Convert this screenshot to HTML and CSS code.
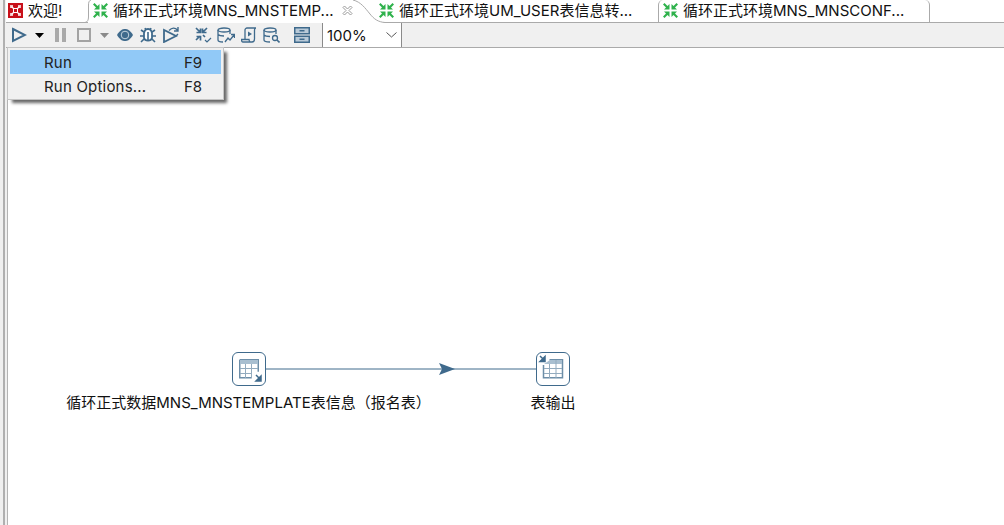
FILE: index.html
```html
<!DOCTYPE html>
<html lang="zh">
<head>
<meta charset="utf-8">
<title>Transformation</title>
<link rel="stylesheet" href="styles.css">
</head>
<body>
<svg width="0" height="0" class="defs">
  <defs>
    <g id="trans">
      <path d="M0 1.500L1.500 0 4.500 3 6.500 1V6.500H1L3 4.500zM15 1.500L13.500 0 10.500 3 8.500 1V6.500H14L12 4.500zM0 13.500L1.500 15 4.500 12 6.500 14V8.500H1L3 10.500zM15 13.500L13.500 15 10.500 12 8.500 14V8.500H14L12 10.500z" fill="#2fb24c"/>
    </g>
  </defs>
</svg>
<div class="edge"><div class="edge-line"></div></div>
<div class="workspace">
  <div class="tabbar">
    <div class="tab tab-welcome">
      <svg class="logo" width="15" height="15" viewBox="0 0 15 15"><rect width="15" height="15" fill="#c8101a"/><path d="M3.500 3.500L6 6M11.500 3.500L9 6M3.500 11.500L6 9M11.500 11.500L9 9" stroke="#fff" stroke-width="1.200" fill="none"/><path d="M5.500 5.500h4v4h-4z" stroke="#fff" fill="none"/><path d="M2 2h3v3H2zM10 2h3v3h-3zM2 10h3v3H2zM10 10h3v3h-3z" fill="#fff" fill-opacity=".75"/></svg>
      <span>欢迎!</span>
    </div>
    <div class="tab tab-active">
      <svg class="curve-left" width="6" height="23" viewBox="0 0 6 23"><path d="M0 22.500C2.500 22 3.500 20 3.500 17V5C3.500 2.500 4 .5 6 0" fill="none" stroke="#aaa"/></svg>
      <svg class="ti" width="15" height="15" viewBox="0 0 15 15"><use href="#trans"/></svg>
      <span>循环正式环境MNS_MNSTEMP...</span>
      <svg class="close" width="11" height="11" viewBox="0 0 11 11"><path d="M1 2.500L2.500 1 5.500 4 8.500 1 10 2.500 7 5.500 10 8.500 8.500 10 5.500 7 2.500 10 1 8.500 4 5.500z" fill="none" stroke="#9a9a9a"/></svg>
      <svg class="curve" width="32" height="23" viewBox="0 0 32 23"><path d="M0 0C8 2 12 8 17 14 21 19 25 22 32 22.500V23H0z" fill="#fff"/><path d="M0 0C8 2 12 8 17 14 21 19 25 22 32 22.500" fill="none" stroke="#aaa"/></svg>
    </div>
    <div class="tab tab-um">
      <svg class="ti" width="15" height="15" viewBox="0 0 15 15"><use href="#trans"/></svg>
      <span>循环正式环境UM_USER表信息转...</span>
    </div>
    <div class="tab tab-conf">
      <svg class="ti" width="15" height="15" viewBox="0 0 15 15"><use href="#trans"/></svg>
      <span>循环正式环境MNS_MNSCONF...</span>
    </div>
  </div>
  <div class="toolbar">
    <svg class="tool-run" width="16" height="16" viewBox="0 0 16 16"><path d="M2 2l12 6-12 6z" fill="none" stroke="#3f6a8c" stroke-width="2"/></svg>
    <svg class="tool-drop" width="9" height="5" viewBox="0 0 9 5"><path d="M0 0h9L4.500 5z" fill="#000"/></svg>
    <svg class="tool-pause" width="11" height="14" viewBox="0 0 11 14"><path d="M0 0h4v14H0zM7 0h4v14H7z" fill="#a9a9a9"/></svg>
    <svg class="tool-stop" width="14" height="14" viewBox="0 0 14 14"><rect x="1" y="1" width="12" height="12" fill="none" stroke="#a3a3a3" stroke-width="2"/></svg>
    <svg class="tool-drop2" width="9" height="5" viewBox="0 0 9 5"><path d="M0 0h9L4.500 5z" fill="#8a8a8a"/></svg>
    <svg class="tool-eye" width="16" height="12" viewBox="0 0 16 12"><path d="M0 6C3 1 5.500 0 8 0s5 1 8 6c-3 5-5.500 6-8 6S3 11 0 6z" fill="#3f6a8c"/><circle cx="8" cy="6" r="3.800" fill="#3f6a8c" stroke="#c5d4df"/></svg>
    <svg class="tool-bug" width="16" height="16" viewBox="0 0 16 16"><path d="M5 3.500C6 1.500 10 1.500 11 3.500L12 6V11C11 14.500 5 14.500 4 11V6z" fill="#fff" stroke="#3f6a8c" stroke-width="1.800"/><path d="M8 5v9M4 5L1 3M12 5l3-2M4 9H0M12 9h4M4 12l-3 3M12 12l3 3M5 1L6 3M11 1L10 3" stroke="#3f6a8c" stroke-width="1.600" fill="none"/></svg>
    <svg class="tool-step" width="17" height="16" viewBox="0 0 17 16"><path d="M1 3v12l12-6z" fill="none" stroke="#3f6a8c" stroke-width="1.800"/><path d="M6 3.500C9 .5 12 .5 14.500 3M15 0v4H11M15 7l-2 2" fill="none" stroke="#3f6a8c" stroke-width="1.400"/></svg>
    <svg class="tool-a" width="17" height="16" viewBox="0 0 17 16"><path d="M1 1l4 4M5.500 1.500v4h-4M12 1L8 5M7.500 1.500v4h4M1 13l4-4M5.500 13.500v-4h-4M8 8l2 2" fill="none" stroke="#3f6a8c" stroke-width="1.700"/><path d="M10 13l2 2 4-4" fill="none" stroke="#3f6a8c" stroke-width="1.200"/></svg>
    <svg class="tool-b" width="18" height="16" viewBox="0 0 18 16"><ellipse cx="7" cy="3" rx="6" ry="2" fill="none" stroke="#3f6a8c" stroke-width="1.300"/><path d="M1 3v10c0 1 2 2 5 2M13 3v4M1 7.500c1 1 3 1.500 6 1.500" fill="none" stroke="#3f6a8c" stroke-width="1.300"/><path d="M8 15l3-4 2 2 4-5M14 7.500h3.500v3.500" fill="none" stroke="#3f6a8c" stroke-width="1.300"/></svg>
    <svg class="tool-c" width="16" height="16" viewBox="0 0 16 16"><path d="M4 12V3c0-1 1-2 2-2h9c-1 0-1.500 1-1.500 2v9c0 2-1 3-2.500 3H2c-1 0-1.500-1-1.500-2.500H8c0 1 .5 1.500 1 2.500" fill="none" stroke="#3f6a8c" stroke-width="1.300"/><path d="M7 4.500l4 2.500-4 2.500z" fill="#3f6a8c"/></svg>
    <svg class="tool-d" width="17" height="16" viewBox="0 0 17 16"><ellipse cx="7" cy="3" rx="6" ry="2" fill="none" stroke="#3f6a8c" stroke-width="1.300"/><path d="M1 3v10c0 1 2 2 6 2M13 3v4M1 8c1 1 3 1.500 6 1.500" fill="none" stroke="#3f6a8c" stroke-width="1.300"/><circle cx="12" cy="11" r="2.500" fill="none" stroke="#3f6a8c" stroke-width="1.300"/><path d="M14 13l2.500 2.500" stroke="#3f6a8c" stroke-width="1.600"/></svg>
    <svg class="tool-e" width="16" height="16" viewBox="0 0 16 16"><rect x=".75" y=".75" width="14.500" height="6" fill="#b9cad8" stroke="#3f6a8c" stroke-width="1.500"/><rect x=".75" y="9.250" width="14.500" height="6" fill="#b9cad8" stroke="#3f6a8c" stroke-width="1.500"/><path d="M5.500 3.750h5M5.500 12.250h5" stroke="#3f6a8c" stroke-width="1.500"/></svg>
    <div class="zoom">
      <span>100%</span>
      <svg width="11" height="6" viewBox="0 0 11 6"><path d="M.5.500L5.500 5 10.500.500" fill="none" stroke="#555"/></svg>
    </div>
  </div>
  <div class="main">
    <div class="rail"></div>
    <div class="canvas">
      <div class="menu">
        <div class="menu-item is-hot"><span class="menu-label">Run</span><span>F9</span></div>
        <div class="menu-item"><span class="menu-label">Run Options...</span><span>F8</span></div>
      </div>
      <svg class="hop" width="270" height="12" viewBox="0 0 270 12">
        <path d="M0 6h270" stroke="#3f6a8c"/>
        <path d="M173 0l16 6-16 6 3-6z" fill="#3f6a8c"/>
      </svg>
      <div class="step step-in">
        <div class="step-icon step-icon-in">
          <svg width="32" height="32" viewBox="0 0 32 32">
            <path d="M6.750 6.750h18.500v12M6.750 6.750v18h12" fill="none" stroke="#6d8ea8" stroke-width="1.500"/>
            <path d="M7 7h18v4H7z" fill="#a9bfd0"/>
            <path d="M7 15.500h18M7 20.500h12M12.500 11v14M18.500 11v14" stroke="#93abbe"/>
            <path d="M23 22l4 4M28 23v5h-5z" stroke="#3f6a8c" stroke-width="1.500" fill="#3f6a8c"/>
          </svg>
        </div>
        <div class="step-name">循环正式数据MNS_MNSTEMPLATE表信息（报名表）</div>
      </div>
      <div class="step step-out">
        <div class="step-icon">
          <svg width="32" height="32" viewBox="0 0 32 32">
            <path d="M12.500 6.750h13v18h-19V12" fill="none" stroke="#6d8ea8" stroke-width="1.500"/>
            <path d="M13 7h12v4H7z" fill="#a9bfd0"/>
            <path d="M7 15.500h18M7 20.500h18M12.500 11v14M19 7v18" stroke="#93abbe"/>
            <path d="M3 3l4 4M8 3.500v5H3z" stroke="#3f6a8c" stroke-width="1.500" fill="#3f6a8c"/>
          </svg>
        </div>
        <div class="step-name">表输出</div>
      </div>
    </div>
  </div>
</div>
</body>
</html>
```
FILE: styles.css
```css
* { box-sizing: border-box; }
html, body { margin: 0; height: 100%; overflow: hidden; }
body {
  background: #fff;
  color: #111;
  font: 15px/19px Inter, "Noto Sans CJK SC", sans-serif;
  width: 1004px;
  height: 525px;
  display: flex;
}
.defs { position: absolute; }

.edge {
  width: 6px;
  flex: none;
  background: #f0f0f0;
  padding-left: 3px;
}
.edge-line { width: 2px; height: 100%; background: #b0b0b0; }
.workspace { flex: 1; min-width: 0; display: flex; flex-direction: column; }

.tabbar {
  height: 23px;
  display: flex;
  border-bottom: 1px solid #aaa;
  background: #fff;
  flex: none;
}
.tab {
  position: relative;
  display: flex;
  align-items: center;
  height: 22px;
  white-space: nowrap;
  padding-bottom: 2px;
}
.tab-welcome {
  width: 82px;
  padding-left: 2px;
  background: #fff;
}
.logo { margin-right: 5px; flex: none; }
.ti { margin-right: 5px; flex: none; }
.tab-active {
  width: 267px;
  height: 23px;
  padding-left: 5px;
  padding-bottom: 3px;
  background: #fff;
}
.curve-left { position: absolute; left: -3px; top: 0; }
.close { position: absolute; left: 254px; top: 5px; }
.curve { position: absolute; left: 265px; top: 0; z-index: 1; }
.tab-um {
  width: 303px;
  padding-left: 24px;
}
.tab-conf {
  width: 272px;
  padding-left: 4px;
  border-left: 1px solid #aaa;
  border-right: 1px solid #aaa;
  border-radius: 5px 5px 0 0;
}

.toolbar {
  height: 25px;
  flex: none;
  display: flex;
  align-items: center;
  background: #f0f0f0;
  border-bottom: 1px solid #aaa;
  padding-left: 5px;
}
.toolbar svg { flex: none; }
.tool-drop { margin-left: 8px; }
.tool-pause { margin-left: 11px; }
.tool-stop { margin-left: 11px; }
.tool-drop2 { margin-left: 9px; }
.tool-eye { margin-left: 8px; }
.tool-bug { margin-left: 7px; }
.tool-step { margin-left: 7px; }
.tool-a { margin-left: 15px; }
.tool-b { margin-left: 5px; }
.tool-c { margin-left: 6px; }
.tool-d { margin-left: 6px; }
.tool-e { margin-left: 14px; }
.zoom {
  margin-left: 12px;
  width: 80px;
  height: 24px;
  background: #fff;
  border-left: 1px solid #8a8a8a;
  border-right: 1px solid #8a8a8a;
  display: flex;
  align-items: center;
  justify-content: space-between;
  padding: 0 4px;
}

.main { flex: 1; display: flex; min-height: 0; }
.rail {
  width: 2px;
  flex: none;
  background: #f0f0f0;
  border-right: 1px solid #b4b4b4;
}
.canvas { flex: 1; position: relative; background: #fff; }

.menu {
  position: absolute;
  left: -1px;
  top: -1px;
  width: 217px;
  height: 53px;
  padding: 2px;
  background: #f0f0f0;
  border: 1px solid #c4c4c4;
  box-shadow: 4px 4px 3px -1px rgba(0, 0, 0, .6);
  z-index: 2;
}
.menu-item {
  height: 24px;
  display: flex;
  align-items: center;
  padding-left: 34px;
  color: #222;
}
.menu-label { width: 140px; letter-spacing: .2px; }
.is-hot { background: #91c9f7; }

.hop { position: absolute; left: 258px; top: 315px; }
.step { position: absolute; display: flex; flex-direction: column; align-items: center; white-space: nowrap; }
.step-icon {
  width: 34px;
  height: 34px;
  border: 1px solid #3f6a8c;
  border-radius: 6px;
  background: #fff;
}
.step-icon-in { margin-left: 1px; }
.step-icon svg { display: block; }
.step-name { margin-top: 7px; }
.step-in { left: 62px; top: 304px; width: 357px; }
.step-out { left: 522px; top: 304px; width: 46px; }
```
